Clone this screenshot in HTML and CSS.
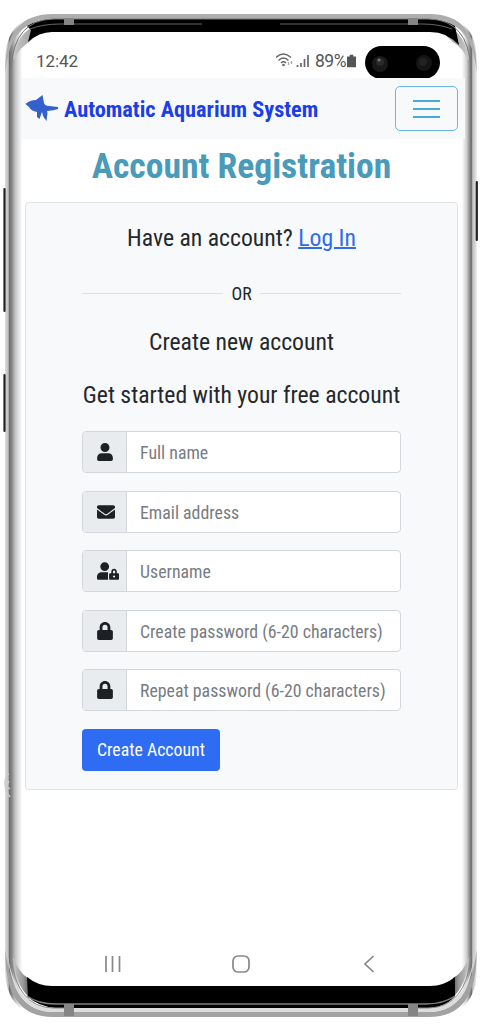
FILE: index.html
```
<!DOCTYPE html>
<html lang="en">
<head>
<meta charset="utf-8">
<title>Account Registration</title>
<link rel="stylesheet" href="styles.css">
</head>
<body>
<div class="phone">
  <svg class="frame" viewBox="0 0 485 1034" aria-hidden="true">
    <defs>
      <linearGradient id="sides" gradientUnits="userSpaceOnUse" x1="5" y1="0" x2="477" y2="0">
        <stop offset="0" stop-color="#dedede"/><stop offset=".007" stop-color="#bdbdbd"/>
        <stop offset=".009" stop-color="#6e6e6e"/><stop offset=".014" stop-color="#858585"/>
        <stop offset=".021" stop-color="#bebebe"/><stop offset=".027" stop-color="#dadada"/>
        <stop offset=".037" stop-color="#fff"/><stop offset=".968" stop-color="#fff"/>
        <stop offset=".978" stop-color="#d0d0d0"/><stop offset=".984" stop-color="#929292"/>
        <stop offset=".988" stop-color="#686868"/><stop offset=".991" stop-color="#c4c4c4"/>
        <stop offset=".996" stop-color="#d6d6d6"/><stop offset="1" stop-color="#f2f2f2"/>
      </linearGradient>
      <linearGradient id="shadeLeft"><stop offset="0" stop-color="#c8c8c8"/><stop offset=".6" stop-color="#999"/><stop offset="1" stop-color="#555"/></linearGradient>
      <linearGradient id="shadeRight"><stop offset="0" stop-color="#555"/><stop offset=".4" stop-color="#999"/><stop offset="1" stop-color="#c8c8c8"/></linearGradient>
    </defs>
    <path d="M5 62Q5 14 53 14H429Q477 14 477 62V968Q477 1017 429 1017H53Q5 1017 5 968Z" fill="url(#sides)"/>
    <!-- top edge -->
    <path d="M5.500 72Q4 14 53 14H429Q478 14 476.500 72Q472 19 429 19H53Q10 19 5.500 72Z" fill="#adadad"/>
    <path d="M13 60Q17 25 53 20L29 42Q20 48 16 56Z" fill="url(#shadeLeft)"/>
    <path d="M469 60Q465 25 429 20L453 42Q462 48 466 56Z" fill="url(#shadeRight)"/>
    <path d="M27 26Q38 19 55 19H427Q444 19 455 26L459 45Q447 32 430 32H52Q39 32 28 42Q30 34 31 30Z" fill="#000"/>
    <path d="M11 68Q14 20 53 19H429Q468 20 471 68" fill="none" stroke="#777"/>
    <path d="M30 29Q43 24 60 24H202M280 24H422Q439 24 452 29" fill="none" stroke="#666"/>
    <!-- bottom edge -->
    <path d="M5.500 950Q4 1017 53 1017H429Q478 1017 476.500 950Q470 1012 429 1012H53Q12 1012 5.500 950Z" fill="#a2a2a2"/>
    <path d="M7 950Q12 1012 53 1012H429Q470 1012 475 950Q468 1008 429 1008H53Q14 1008 7 950Z" fill="#dcdcdc"/>
    <path d="M13 957Q19 973 28 978L30 998Q15 985 13 957Z" fill="url(#shadeLeft)"/>
    <path d="M469 957Q463 973 453 978L452 998Q467 985 469 957Z" fill="url(#shadeRight)"/>
    <path d="M27 977Q38 986 52 986H430Q444 986 455 977V996Q445 1008 427 1008H55Q38 1006 28 997Z" fill="#000"/>
    <path d="M27 996Q38 1004 56 1004H426Q443 1004 455 996" fill="none" stroke="#808080" stroke-width="1.500"/>
    <path d="M11 956Q16 1007 53 1008H70M412 1008H429Q466 1007 471 956" fill="none" stroke="#888"/>
    <path d="M64 18H74V25H64ZM408 18H418V25H408ZM64 1004H74V1016H64ZM408 1004H418V1016H408Z" fill="#858585"/>
    <path d="M4.500 189V311M4.500 375V431M476.800 182V240" fill="none" stroke="#222" stroke-width="2.200" stroke-linecap="round"/>
    <path d="M9 774Q5 775 5 783Q5 791 10 797M9 781L6 786L10 789" fill="none" stroke="#ccc" stroke-width="1.500"/>
  </svg>

  <main class="screen">
    <div class="status">
      <span class="clock">12:42</span>
      <div class="indicators">
        <svg width="46" height="18" viewBox="0 0 46 18" fill="none" stroke="#666" stroke-width="1.4">
          <path d="M0 5.500Q7.500-1.500 15 5.500M2.500 8.500Q7.500 3.500 12.500 8.500M5 11Q7.500 8.500 10 11"/><circle cx="7.500" cy="13" r="1.300" fill="#666" stroke="none"/>
          <path d="M12.500 13v-3M15.500 9v3" stroke="#aaa"/><path d="M21.500 15v-2M25 15v-4M28.500 15V7M32 15V3" stroke-width="1.700"/>
        </svg>
        <span class="percent">89%</span>
        <svg width="9" height="14" viewBox="0 0 10 14"><path d="M3 0h4v2h3v12H0V2h3z" fill="#555"/></svg>
      </div>
      <svg class="camera" width="75" height="33" viewBox="0 0 75 33"><rect width="75" height="33" rx="16.500"/><circle cx="15" cy="18" r="8" fill="#181818"/><circle cx="15" cy="16" r="4" fill="#2b2b2b"/><circle cx="14" cy="14" r="1.500" fill="#777"/><circle cx="59" cy="17" r="8" fill="#141414"/><circle cx="58" cy="16" r="4" fill="#222"/></svg>
    </div>

    <header class="navbar">
      <a class="brand">
        <svg width="34" height="28" viewBox="0 0 34 28"><path d="M.500 9Q5 5 11 5L17.500 0L19 8Q20 11 24 11L33 12V14Q29 15.500 22 16L22.500 18L21.500 26L18.500 22L17 17L14.500 24L12 22V17Q6 16 4 12Z" fill="#3561cc"/></svg>
        <span class="condensed brand-name">Automatic Aquarium System</span>
      </a>
      <button class="toggle" aria-label="Menu"><span></span><span></span><span></span></button>
    </header>

    <h1 class="condensed">Account Registration</h1>

    <section class="card">
      <p class="condensed lead">Have an account? <a class="link">Log In</a></p>
      <div class="divider"><span class="condensed">OR</span></div>
      <p class="condensed lead create">Create new account</p>
      <p class="condensed lead start">Get started with your free account</p>
      <form class="form">
        <label class="field"><span class="icon"><svg width="16" height="18" viewBox="0 0 448 512"><path d="M224 256a128 128 0 1 0 0-256 128 128 0 0 0 0 256zM130 288h188c72 0 130 58 130 130v46c0 26-22 48-48 48H48c-26 0-48-22-48-48v-46c0-72 58-130 130-130z"/></svg></span><span class="condensed hint">Full name</span></label>
        <label class="field"><span class="icon"><svg width="18" height="18" viewBox="0 0 512 512"><path d="M502 191c4-3 10 0 10 5v204c0 27-21 48-48 48H48c-27 0-48-21-48-48V196c0-5 6-8 10-5 22 17 52 39 154 113 21 16 57 48 92 48s71-32 92-48c102-74 132-96 154-113zM256 320c23 0 57-29 73-41 133-97 143-105 174-129 6-4 9-11 9-19v-19c0-27-21-48-48-48H48c-27 0-48 21-48 48v19c0 8 3 15 9 19 31 24 41 32 174 129 16 12 50 41 73 41z"/></svg></span><span class="condensed hint">Email address</span></label>
        <label class="field"><span class="icon"><svg width="22" height="18" viewBox="0 0 640 512"><path d="M224 256a128 128 0 1 0 0-256 128 128 0 0 0 0 256zM320 320v-30H134C60 290 0 350 0 418v46c0 26 21 48 48 48h280c-7-14-8-20-8-32zM608 320h-32v-48c0-44-36-80-80-80s-80 36-80 80v48h-32c-18 0-32 14-32 32v128c0 18 14 32 32 32h224c18 0 32-14 32-32V352c0-18-14-32-32-32zm-112 128a32 32 0 1 1 0-64 32 32 0 0 1 0 64zm32-128h-64v-48a32 32 0 0 1 64 0z"/></svg></span><span class="condensed hint">Username</span></label>
        <label class="field"><span class="icon"><svg width="16" height="18" viewBox="0 0 448 512"><path d="M400 224h-24v-72C376 68 308 0 224 0S72 68 72 152v72H48c-26 0-48 22-48 48v192c0 26 22 48 48 48h352c26 0 48-22 48-48V272c0-26-22-48-48-48zm-104 0H152v-72a72 72 0 0 1 144 0z"/></svg></span><span class="condensed hint">Create password (6-20 characters)</span></label>
        <label class="field"><span class="icon"><svg width="16" height="18" viewBox="0 0 448 512"><path d="M400 224h-24v-72C376 68 308 0 224 0S72 68 72 152v72H48c-26 0-48 22-48 48v192c0 26 22 48 48 48h352c26 0 48-22 48-48V272c0-26-22-48-48-48zm-104 0H152v-72a72 72 0 0 1 144 0z"/></svg></span><span class="condensed hint">Repeat password (6-20 characters)</span></label>
        <button class="submit" type="button"><span class="condensed">Create Account</span></button>
      </form>
    </section>

    <nav class="system-nav">
      <svg width="18" height="18" viewBox="0 0 18 18"><path d="M2 1v16M8.500 1v16M15.500 1v16"/></svg>
      <svg width="18" height="18" viewBox="0 0 18 18"><rect x="1" y="1" width="16" height="16" rx="5"/></svg>
      <svg width="12" height="18" viewBox="0 0 12 18"><path d="M10.500 1L2 9l8.500 8"/></svg>
    </nav>
  </main>
</div>
</body>
</html>
```
FILE: styles.css
```
* { box-sizing: border-box; }
body { margin: 0; background: #fff; font-family: Roboto, sans-serif; color: #25282c; }
p, h1 { margin: 0; }
.condensed { font-family: "Roboto Condensed", Roboto, sans-serif; font-stretch: 75%; white-space: nowrap; }
.phone { position: relative; width: 485px; height: 1034px; overflow: hidden; padding: 32px 20px 48px 22px; }
.frame { position: absolute; inset: 0; width: 485px; height: 1034px; }
.screen { position: relative; width: 443px; height: 954px; display: flex; flex-direction: column; }
.status { height: 46px; display: flex; align-items: flex-start; padding: 14px 25px 0 14px; color: #555; }
.clock { font-size: 17px; line-height: 30px; flex: 1; letter-spacing: -.1px; }
.indicators { display: flex; align-items: center; height: 30px; margin-right: 9px; }
.indicators svg:first-child { margin-right: -7px; }
.percent { font-size: 17.500px; letter-spacing: -.5px; margin-right: 1px; }
.camera { flex: none; }
.navbar { height: 61px; background: #f8f9fb; display: flex; align-items: center; justify-content: space-between; padding: 0 7px 0 3px; }
.brand { display: flex; align-items: center; gap: 5px; }
.brand-name { color: #1a3ee8; font-size: 22.300px; font-weight: 700; }
.toggle { width: 63px; height: 45px; border: 1.500px solid #69b8df; border-radius: 5px; background: transparent; display: flex; flex-direction: column; align-items: center; justify-content: center; gap: 6px; padding: 0; }
.toggle span { width: 27px; height: 2px; background: #45aadb; }
h1 { height: 63px; line-height: 54px; text-align: center; color: #4a9aba; font-size: 35.600px; font-weight: 700; padding-right: 4px; }
.card { width: 433px; height: 588px; margin-left: 3px; border: 1px solid #e1e3e5; border-radius: 4px; background: #f8f9fb; padding: 18px 56px 0; display: flex; flex-direction: column; align-items: stretch; }
.lead { height: 34px; line-height: 34px; font-size: 23.700px; display: flex; justify-content: center; white-space: pre; }
.link { color: #2d6bf0; text-decoration: underline; text-decoration-thickness: 1.500px; }
.divider { display: flex; align-items: center; gap: 8px; height: 26px; margin-top: 25px; font-size: 17.800px; }
.divider::before, .divider::after { content: ""; height: 1px; flex: 1; background: #dfe1e3; }
.create { margin-top: 19px; }
.start { margin-top: 19px; }
.form { display: flex; flex-direction: column; gap: 17.600px; padding-top: 19px; }
.field { height: 42px; display: flex; border: 1px solid #d3d7dc; border-radius: 4px; background: #fff; overflow: hidden; }
.icon { width: 44px; background: #e9ecef; border-right: 1px solid #d3d7dc; display: flex; align-items: center; padding-left: 14px; fill: #1d2025; }
.hint { padding-left: 13px; font-size: 17.820px; line-height: 41px; color: #777c82; }
.submit { width: 138px; height: 42px; border: 0; border-radius: 4px; background: #2e6cf3; color: #fff; font-size: 17.800px; padding: 0; }
.system-nav { margin-top: auto; height: 31px; display: flex; justify-content: space-between; padding: 0 90px 0 82px; fill: none; stroke: #888; stroke-width: 1.700; }
.system-nav svg:nth-child(2) { margin-right: 4px; }
```
